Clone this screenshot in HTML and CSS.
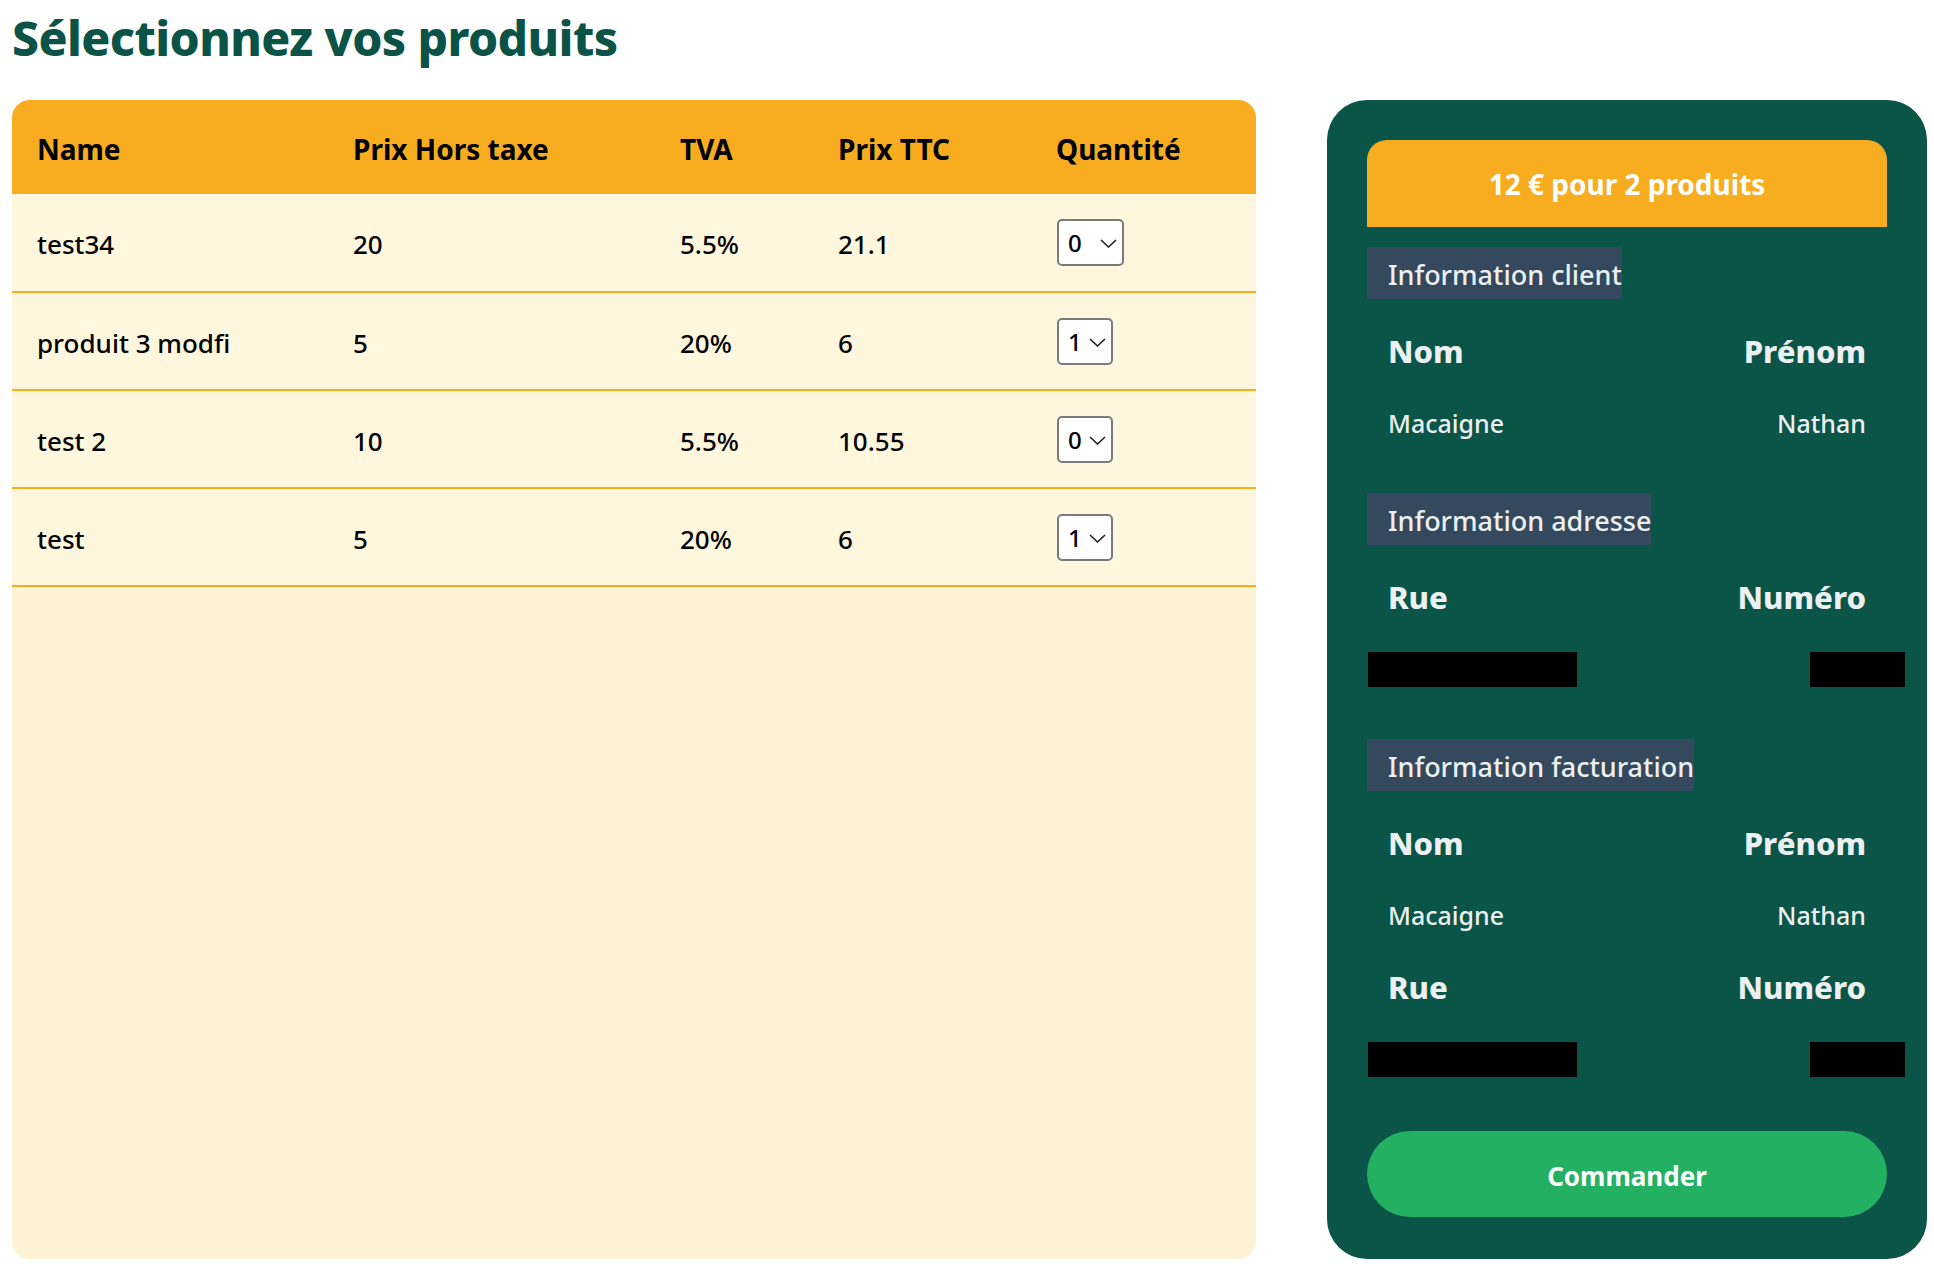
FILE: index.html
```html
<!DOCTYPE html>
<html lang="fr">
<head>
    <meta charset="UTF-8">
    <meta name="viewport" content="width=device-width, initial-scale=1.0">
    <title>Sélectionnez vos produits</title>
    <link rel="stylesheet" href="styles.css">
</head>
<body>
    <h1 class="title">Sélectionnez vos produits</h1>
    <div class="layout">
        <section class="products">
            <table class="product-table">
                <colgroup>
                    <col class="col-name">
                    <col class="col-ht">
                    <col class="col-tva">
                    <col class="col-ttc">
                    <col class="col-qty">
                </colgroup>
                <thead>
                    <tr>
                        <th>Name</th>
                        <th>Prix Hors taxe</th>
                        <th>TVA</th>
                        <th>Prix TTC</th>
                        <th>Quantité</th>
                    </tr>
                </thead>
                <tbody>
                    <tr>
                        <td>test34</td>
                        <td>20</td>
                        <td>5.5%</td>
                        <td>21.1</td>
                        <td class="qty-cell">
                            <div class="qty qty-wide">
                                <select><option>0</option><option>1</option><option>10</option></select>
                                <svg class="chevron" viewBox="0 0 17 9"><path d="M1 1 L8.5 8 L16 1"/></svg>
                            </div>
                        </td>
                    </tr>
                    <tr>
                        <td>produit 3 modfi</td>
                        <td>5</td>
                        <td>20%</td>
                        <td>6</td>
                        <td class="qty-cell">
                            <div class="qty">
                                <select><option>1</option><option>0</option></select>
                                <svg class="chevron" viewBox="0 0 17 9"><path d="M1 1 L8.5 8 L16 1"/></svg>
                            </div>
                        </td>
                    </tr>
                    <tr>
                        <td>test 2</td>
                        <td>10</td>
                        <td>5.5%</td>
                        <td>10.55</td>
                        <td class="qty-cell">
                            <div class="qty">
                                <select><option>0</option><option>1</option></select>
                                <svg class="chevron" viewBox="0 0 17 9"><path d="M1 1 L8.5 8 L16 1"/></svg>
                            </div>
                        </td>
                    </tr>
                    <tr>
                        <td>test</td>
                        <td>5</td>
                        <td>20%</td>
                        <td>6</td>
                        <td class="qty-cell">
                            <div class="qty">
                                <select><option>1</option><option>0</option></select>
                                <svg class="chevron" viewBox="0 0 17 9"><path d="M1 1 L8.5 8 L16 1"/></svg>
                            </div>
                        </td>
                    </tr>
                </tbody>
            </table>
        </section>

        <aside class="cart">
            <div class="cart-total">12 € pour 2 produits</div>

            <h3 class="cart-label">Information client</h3>
            <div class="field-row field-head"><span>Nom</span><span>Prénom</span></div>
            <div class="field-row"><span>Macaigne</span><span>Nathan</span></div>

            <h3 class="cart-label">Information adresse</h3>
            <div class="field-row field-head"><span>Rue</span><span>Numéro</span></div>
            <div class="field-row"><span class="hidden-left"></span><span class="hidden-right"></span></div>

            <h3 class="cart-label">Information facturation</h3>
            <div class="field-row field-head"><span>Nom</span><span>Prénom</span></div>
            <div class="field-row"><span>Macaigne</span><span>Nathan</span></div>
            <div class="field-row field-head"><span>Rue</span><span>Numéro</span></div>
            <div class="field-row"><span class="hidden-left"></span><span class="hidden-right"></span></div>

            <button class="order-btn">Commander</button>
        </aside>
    </div>
</body>
</html>
```

FILE: styles.css
```css
*{
    margin: 0;
    padding: 0;
    box-sizing: border-box;
}
body{
    font-family: "Noto Sans", "DejaVu Sans Condensed", sans-serif;
    background: #fff;
    padding: 0 7px 0 12px;
}
.title{
    color: #0b5347;
    font-size: 48px;
    font-weight: 800;
    line-height: 76px;
    margin: 0 0 24px;
    letter-spacing: -0.6px;
}
.layout{
    display: flex;
    gap: 71px;
    height: 1159px;
}

/* tableau produits */
.products{
    flex: 1;
    background: #fdf2d3;
    border-radius: 18px;
    overflow: hidden;
}
.product-table{
    width: 100%;
    border-collapse: collapse;
    table-layout: fixed;
}
.col-name{ width: 316px; }
.col-ht{ width: 327px; }
.col-tva{ width: 158px; }
.col-ttc{ width: 218px; }
.col-qty{ width: 225px; }
.product-table th{
    background: #f8ac20;
    height: 94px;
    padding: 3px 25px 0;
    text-align: left;
    font-size: 28px;
    font-weight: bold;
    color: #000;
}
.product-table td{
    background: #fff7dd;
    height: 98px;
    padding: 3px 25px 0;
    font-size: 26px;
    font-weight: 500;
    color: #000;
    border-bottom: 2px solid #f8ac20;
}
.product-table td.qty-cell{
    padding: 0 0 0 26px;
}
.qty{
    position: relative;
    width: 56px;
    height: 47px;
}
.qty-wide{
    width: 67px;
}
.qty select{
    appearance: none;
    -webkit-appearance: none;
    width: 100%;
    height: 100%;
    border: 2px solid #7a7a7a;
    border-radius: 5px;
    background: #fff;
    color: #000;
    font-family: inherit;
    font-size: 24px;
    font-weight: 500;
    padding: 0 0 0 9px;
}
.chevron{
    position: absolute;
    right: 7px;
    top: 20px;
    width: 17px;
    height: 9px;
    pointer-events: none;
}
.chevron path{
    fill: none;
    stroke: #222;
    stroke-width: 1.6;
}

/* panier */
.cart{
    width: 600px;
    background: #0a5448;
    border-radius: 40px;
    padding: 40px;
    color: #ecf0f1;
}
.cart-total{
    height: 87px;
    background: #f8ac20;
    border-radius: 20px 20px 0 0;
    color: #fff;
    font-size: 28px;
    font-weight: bold;
    display: flex;
    justify-content: center;
    align-items: center;
    padding-top: 1px;
    margin-bottom: 20px;
}
.cart-label{
    width: fit-content;
    background: #34495e;
    font-size: 27px;
    font-weight: 500;
    line-height: 48px;
    padding: 4px 0 0 21px;
    margin: 0 0 16px;
}
.field-row{
    display: flex;
    justify-content: space-between;
    align-items: center;
    height: 72px;
    line-height: 72px;
    padding: 0 21px;
    font-size: 25px;
    font-weight: 500;
}
.field-head{
    font-size: 31px;
    font-weight: 800;
}
.field-row + .cart-label{
    margin-top: 34px;
}
.hidden-left{
    display: block;
    width: 209px;
    height: 35px;
    margin-left: -20px;
    background: #000;
}
.hidden-right{
    display: block;
    width: 95px;
    height: 35px;
    margin-right: -39px;
    background: #000;
}
.order-btn{
    display: flex;
    justify-content: center;
    align-items: center;
    width: 100%;
    height: 86px;
    margin-top: 36px;
    padding-top: 3px;
    border: none;
    border-radius: 43px;
    background: #24b063;
    color: #fff;
    font-family: inherit;
    font-size: 26px;
    font-weight: bold;
    cursor: pointer;
}
```
